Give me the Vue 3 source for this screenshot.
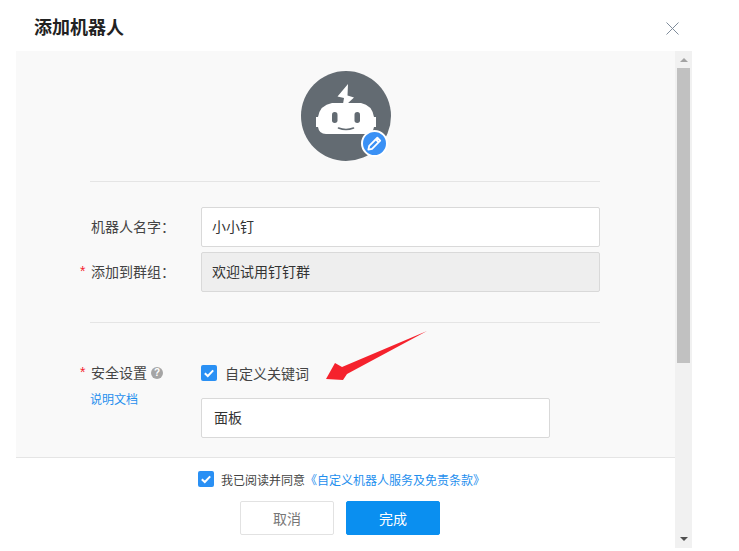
<script setup>
const title = '添加机器人'
</script>

<template>
  <div class="page">
    <header class="head">
      <h1 class="title">{{ title }}</h1>
      <svg class="close" width="13" height="13" viewBox="0 0 13 13"><path d="M.5.5l12 12M12.5.5l-12 12" stroke="#7f8c9b" stroke-width="1" fill="none"/></svg>
    </header>
    <div class="shell">
      <div class="col">
        <main class="body">
          <div class="avatar-wrap">
            <div class="avatar">
              <svg width="90" height="90" viewBox="0 0 90 90">
                <path d="M47 13 L36.5 25.5 L43 27 L42 33 L46 33 L53 26.5 L46.5 24.5 Z" fill="#fff"/>
                <path d="M31 32 H60 Q71 34 73 46 H75 V56 H73 Q72 63 65 63 H25 Q18 63 17 56 H15 V46 H17 Q19 34 31 32 Z" fill="#fff"/>
                <rect x="31" y="41" width="5.5" height="11" rx="2.7" fill="#636b72"/>
                <rect x="53.5" y="41" width="5.5" height="11" rx="2.7" fill="#636b72"/>
                <path d="M37.5 57 Q45 60 52.5 57" stroke="#636b72" stroke-width="1.6" fill="none" stroke-linecap="round"/>
              </svg>
            </div>
            <span class="edit">
              <svg width="17" height="17" viewBox="0 0 16 16"><path d="M10.7 2.6l2.7 2.7-7.7 7.7-3.5.8.8-3.5zM9.2 4.2l2.6 2.6" fill="none" stroke="#fff" stroke-width="1.7" stroke-linejoin="round"/></svg>
            </span>
          </div>
          <hr class="line first" />
          <div class="row">
            <label class="label">机器人名字：</label>
            <div class="field wide">小小钉</div>
          </div>
          <div class="row second">
            <label class="label"><i class="star">*</i>添加到群组：</label>
            <div class="field wide off">欢迎试用钉钉群</div>
          </div>
          <hr class="line third" />
          <div class="safe">
            <div class="label-col">
              <div class="label plain"><i class="star">*</i>安全设置<span class="help">?</span></div>
              <a class="doc">说明文档</a>
            </div>
            <div class="opts">
              <div class="check-row">
                <span class="box"><svg width="16" height="16" viewBox="0 0 16 16"><path d="M3.8 8.2l3 2.8 5.4-5.6" fill="none" stroke="#fff" stroke-width="2"/></svg></span>
                <span class="check-text">自定义关键词</span>
              </div>
              <div class="field keyword">面板</div>
            </div>
          </div>
        </main>
        <footer class="foot">
          <div class="agree">
            <span class="box"><svg width="16" height="16" viewBox="0 0 16 16"><path d="M3.8 8.2l3 2.8 5.4-5.6" fill="none" stroke="#fff" stroke-width="2"/></svg></span>
            <span class="agree-text">我已阅读并同意</span>
            <a class="terms">《自定义机器人服务及免责条款》</a>
          </div>
          <div class="actions">
            <button class="btn cancel">取消</button>
            <button class="btn ok">完成</button>
          </div>
        </footer>
      </div>
      <div class="scroll">
        <span class="tri up"></span>
        <div class="thumb"></div>
        <span class="tri down"></span>
      </div>
    </div>
    <svg class="arrow" width="106" height="52" viewBox="0 0 106 52">
      <path d="M1 49 L10 33 L17 37 L102 1 L22 44 L18 50 Z" fill="#f5222d"/>
    </svg>
  </div>
</template>

<style>
html, body { margin: 0; background: #fff; }
</style>

<style scoped>
.page {
  position: relative;
  width: 739px;
  height: 551px;
  overflow: hidden;
  background: #fff;
  color: #333;
  font-family: "Liberation Sans", "Noto Sans CJK SC", sans-serif;
  font-size: 14px;
}
.head {
  position: relative;
  height: 51px;
  box-sizing: border-box;
  padding: 15px 0 0 34px;
}
.title {
  margin: 0;
  font-size: 18px;
  line-height: 26px;
  font-weight: 700;
  color: #222;
}
.close { position: absolute; left: 666px; top: 22px; }
.shell {
  display: flex;
  margin-left: 16px;
  width: 676px;
  height: 497px;
}
.col { width: 659px; display: flex; flex-direction: column; }
.body {
  height: 406px;
  background: #f9f9f9;
  overflow: hidden;
  box-sizing: border-box;
  padding: 20px 75px 0 74px;
}
.avatar-wrap { position: relative; width: 90px; height: 90px; margin: 0 auto; left: 0.5px; }
.avatar { width: 90px; height: 90px; border-radius: 50%; background: #636b72; }
.avatar svg { display: block; }
.edit {
  position: absolute;
  left: 60px; top: 59px;
  width: 27px; height: 27px;
  box-sizing: border-box;
  border: 2px solid #fff;
  border-radius: 50%;
  background: #3b91f5;
  display: flex; align-items: center; justify-content: center;
}
.line { margin: 0; border: 0; border-top: 1px solid #e5e5e5; }
.first { margin-top: 20px; }
.third { margin-top: 30px; }
.row { display: flex; align-items: center; margin-top: 25px; }
.row.second { margin-top: 5px; }
.label {
  width: 111px;
  box-sizing: border-box;
  padding-left: 1px;
  flex: none;
  position: relative;
  font-size: 14px;
  color: #444;
  line-height: 20px;
}
.star {
  position: absolute;
  left: -10px;
  top: -1px;
  color: #f5222d;
  font-style: normal;
  font-size: 14px;
}
.field {
  height: 40px;
  box-sizing: border-box;
  background: #fff;
  border: 1px solid #d9d9d9;
  border-radius: 2px;
  line-height: 38px;
  padding-left: 10px;
  font-size: 14px;
  color: #333;
}
.wide { width: 399px; }
.off { background: #eeeeee; }
.safe { display: flex; margin-top: 40px; }
.label-col { width: 111px; flex: none; }
.plain { width: auto; display: flex; align-items: center; height: 20px; }
.help {
  width: 12px; height: 12px;
  margin-left: 4px;
  border-radius: 50%;
  background: #a5a5a5;
  color: #fff;
  font-size: 10px;
  font-weight: 700;
  line-height: 12px;
  text-align: center;
}
.doc { display: block; margin-top: 9px; font-size: 12px; line-height: 16px; color: #1f8fee; }
.check-row { display: flex; align-items: center; height: 22px; }
.box {
  width: 16px; height: 16px;
  border-radius: 2px;
  background: #2a90f4;
  flex: none;
}
.box svg { display: block; }
.check-text { margin-left: 8px; color: #444; font-size: 14px; }
.opts { margin-top: -1px; }
.keyword { width: 349px; margin-top: 14px; padding-left: 12px; }
.foot {
  flex: 1;
  border-top: 1px solid #e5e5e5;
  background: #fff;
}
.agree {
  display: flex;
  align-items: center;
  justify-content: center;
  margin-top: 13px;
  height: 16px;
  font-size: 12px;
  padding-right: 8px;
}
.agree-text { margin-left: 7px; color: #444; }
.terms { color: #1f8fee; }
.actions { display: flex; justify-content: center; gap: 12px; margin-top: 14px; padding-right: 11px; }
.btn {
  width: 94px; height: 34px;
  box-sizing: border-box;
  border-radius: 2px;
  font: 14px "Liberation Sans", "Noto Sans CJK SC", sans-serif;
  padding: 0;
}
.cancel { background: #fff; border: 1px solid #e2e2e2; color: #777; }
.ok { background: #0a8ff0; border: 1px solid #0a8ff0; color: #fff; }
.scroll {
  width: 17px;
  flex: none;
  background: #f1f1f1;
  display: flex;
  flex-direction: column;
  align-items: center;
  position: relative;
}
.thumb { width: 13px; height: 295px; margin-top: 6px; background: #c1c1c1; }
.tri { width: 0; height: 0; border-left: 4px solid transparent; border-right: 4px solid transparent; }
.up { margin-top: 7px; border-bottom: 4px solid #a3a3a3; }
.down { position: absolute; bottom: 7px; border-top: 4px solid #505050; }
.arrow { position: absolute; left: 325px; top: 330px; }
</style>
